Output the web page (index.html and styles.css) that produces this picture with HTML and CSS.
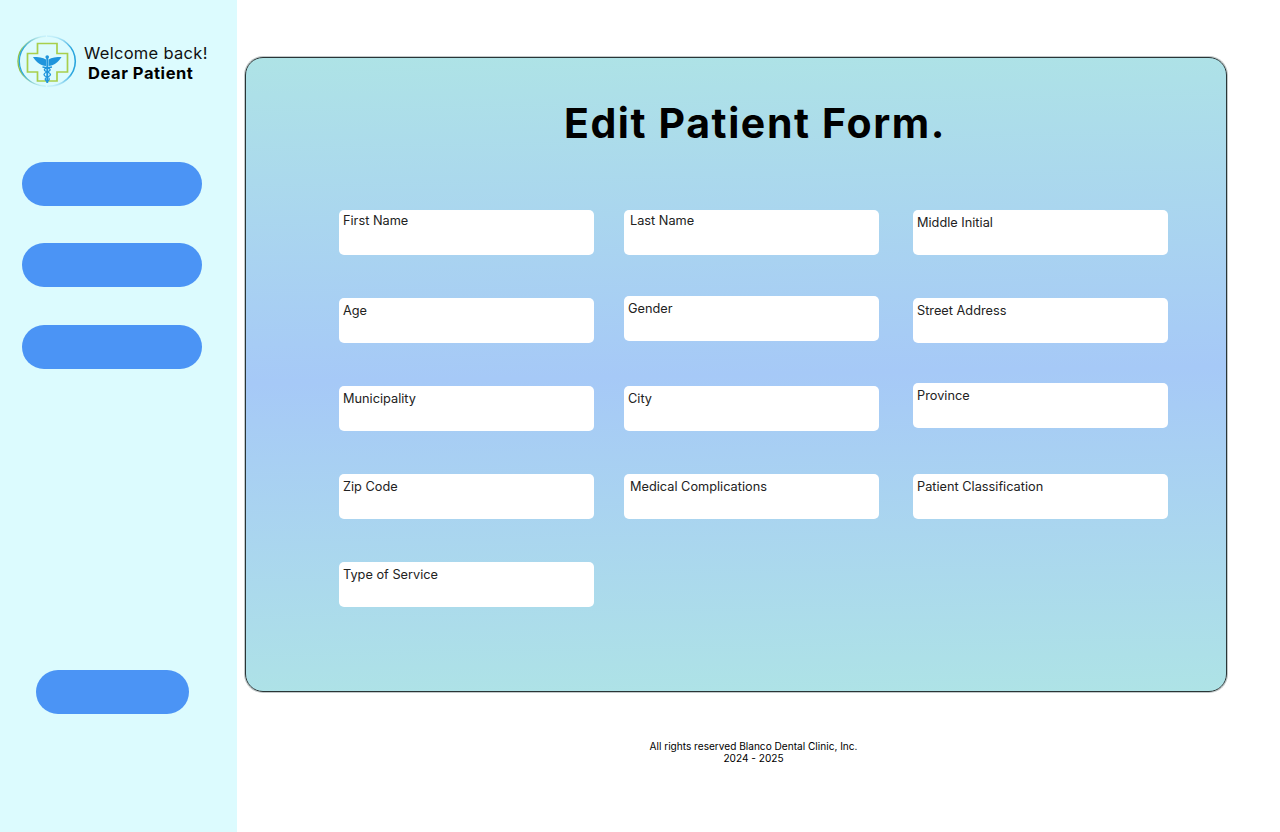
FILE: index.html
```html
<!DOCTYPE html>
<html lang="en">
<head>
<meta charset="utf-8">
<title>Edit Patient Form</title>
<link rel="stylesheet" href="styles.css">
</head>
<body>
<div class="page">
  <aside class="sidebar">
    <div class="brand">
      <svg class="logo" viewBox="0 0 60 52" aria-hidden="true">
        <defs>
          <linearGradient id="ring" x1="0" y1="0" x2="0" y2="1">
            <stop offset="0" stop-color="#2aa5dd" stop-opacity=".1"/>
            <stop offset=".25" stop-color="#2aa5dd"/>
            <stop offset=".75" stop-color="#2aa5dd"/>
            <stop offset="1" stop-color="#2aa5dd" stop-opacity=".1"/>
          </linearGradient>
          <linearGradient id="ringg" x1="0" y1="0" x2="0" y2="1">
            <stop offset="0" stop-color="#8fc24a" stop-opacity="0"/>
            <stop offset=".3" stop-color="#8fc24a"/>
            <stop offset=".7" stop-color="#8fc24a"/>
            <stop offset="1" stop-color="#8fc24a" stop-opacity="0"/>
          </linearGradient>
        </defs>
        <path d="M28 1.500C13 2.500 1 13 1 26.300S13 50 28 51" fill="none" stroke="url(#ringg)" stroke-width="1.400"/>
        <path d="M29 1C14.500 1.500 2.300 12.500 2.300 26.300S14.500 51 29 51.500" fill="none" stroke="url(#ring)" stroke-width="1.300"/>
        <path d="M30 1C46 1 58.300 12.500 58.300 26.300S46 51.500 30 51.500" fill="none" stroke="url(#ring)" stroke-width="1.600"/>
        <path d="M20.500 8.500H40V18.500H50.500V37H40V46H20.500V37H10.500V18.500H20.500Z" fill="none" stroke="#a8cf4c" stroke-width="1.700"/>
        <path d="M16 22C21 22 26 22.500 29 24.500V31C24 30.500 19.500 27.500 16 22Z" fill="#1f95dc"/>
        <path d="M44.500 22C39.500 22 34.500 22.500 31.500 24.500V31C36.500 30.500 41 27.500 44.500 22Z" fill="#1f95dc"/>
        <rect x="29.300" y="21" width="1.900" height="27" fill="#1f95dc"/>
        <path d="M25.500 32C33.500 33 35.500 35 30.200 37C25 39 27 41 30.200 42C33.500 43 32.500 45 30.200 46.500M35 32C27 33 25 35 30.200 37C35.500 39 33.500 41 30.200 42C27 43 28 45 30.200 46.500" fill="none" stroke="#1f95dc" stroke-width="1.300"/>
        <circle cx="30.200" cy="22" r="1.800" fill="#1f95dc"/>
      </svg>
      <div class="greeting">
        <div class="welcome">Welcome back!</div>
        <div class="patient">Dear Patient</div>
      </div>
    </div>
    <nav class="nav">
      <div class="pill"></div>
      <div class="pill pill-second"></div>
      <div class="pill"></div>
    </nav>
    <div class="pill pill-small"></div>
  </aside>
  <main class="main">
    <section class="card">
      <h1 class="title">Edit Patient Form.</h1>
      <div class="grid">
        <div class="field top">First Name</div>
        <div class="field top inset">Last Name</div>
        <div class="field">Middle Initial</div>
        <div class="field">Age</div>
        <div class="field up2">Gender</div>
        <div class="field">Street Address</div>
        <div class="field">Municipality</div>
        <div class="field">City</div>
        <div class="field up3">Province</div>
        <div class="field">Zip Code</div>
        <div class="field inset">Medical Complications</div>
        <div class="field">Patient Classification</div>
        <div class="field">Type of Service</div>
      </div>
    </section>
    <footer class="footer">All rights reserved Blanco Dental Clinic, Inc.<br>2024 - 2025</footer>
  </main>
</div>
</body>
</html>
```
FILE: styles.css
```css
* { box-sizing: border-box; }
html, body { margin: 0; height: 100%; }
body { background: #fff; color: #000; font-family: "Inter", "Liberation Sans", sans-serif; overflow: hidden; }
.page { display: flex; width: 1280px; height: 832px; }
.sidebar { width: 237px; flex: none; background: #dcfbfe; display: flex; flex-direction: column; align-items: flex-start; padding: 35px 0 0 16.500px; }
.brand { display: flex; align-items: flex-start; gap: 7.500px; height: 52px; }
.logo { width: 60px; height: 52px; flex: none; }
.greeting { padding-top: 8px; white-space: nowrap; }
.welcome { font-size: 16.500px; line-height: 20px; letter-spacing: .3px; font-weight: 400; color: #111; }
.patient { font-size: 16.500px; line-height: 20px; font-weight: 700; margin-left: 4px; letter-spacing: .55px; }
.nav { display: flex; flex-direction: column; margin: 75px 0 0 5.500px; }
.pill { width: 180px; height: 44px; border-radius: 22px; background: #4b94f5; margin-bottom: 38px; }
.pill:first-child { margin-bottom: 37px; }
.pill-small { width: 153px; margin: 263px 0 0 19.500px; }
.main { flex: 1; padding: 57px 0 0 8px; }
.card { width: 982px; height: 635px; border: 1px solid #2a3536; box-shadow: 0 0 0 1px rgba(120, 135, 137, .45); border-radius: 18px; background: linear-gradient(179deg, #aee3e6 0%, #a6c9f7 50%, #aee3e6 100%); padding: 40px 0 0 93px; }
.title { margin: 0; width: 832px; text-align: center; font-size: 41px; line-height: 50px; font-weight: 700; letter-spacing: 1.600px; }
.grid { display: grid; grid-template-columns: 285px 289px 255px; grid-auto-rows: 88px; margin-top: 62px; }
.field { width: 255px; height: 45px; background: #fff; border-radius: 5px; padding: 4px 0 0 4px; font-size: 12.750px; line-height: 17px; color: #222; }
.top { padding-top: 2px; }
.inset { padding-left: 6px; }
.up2 { margin-top: -2px; }
.up3 { margin-top: -3px; }
.footer { width: 1017px; margin-top: 48px; text-align: center; font-size: 10.100px; line-height: 12px; }
```
